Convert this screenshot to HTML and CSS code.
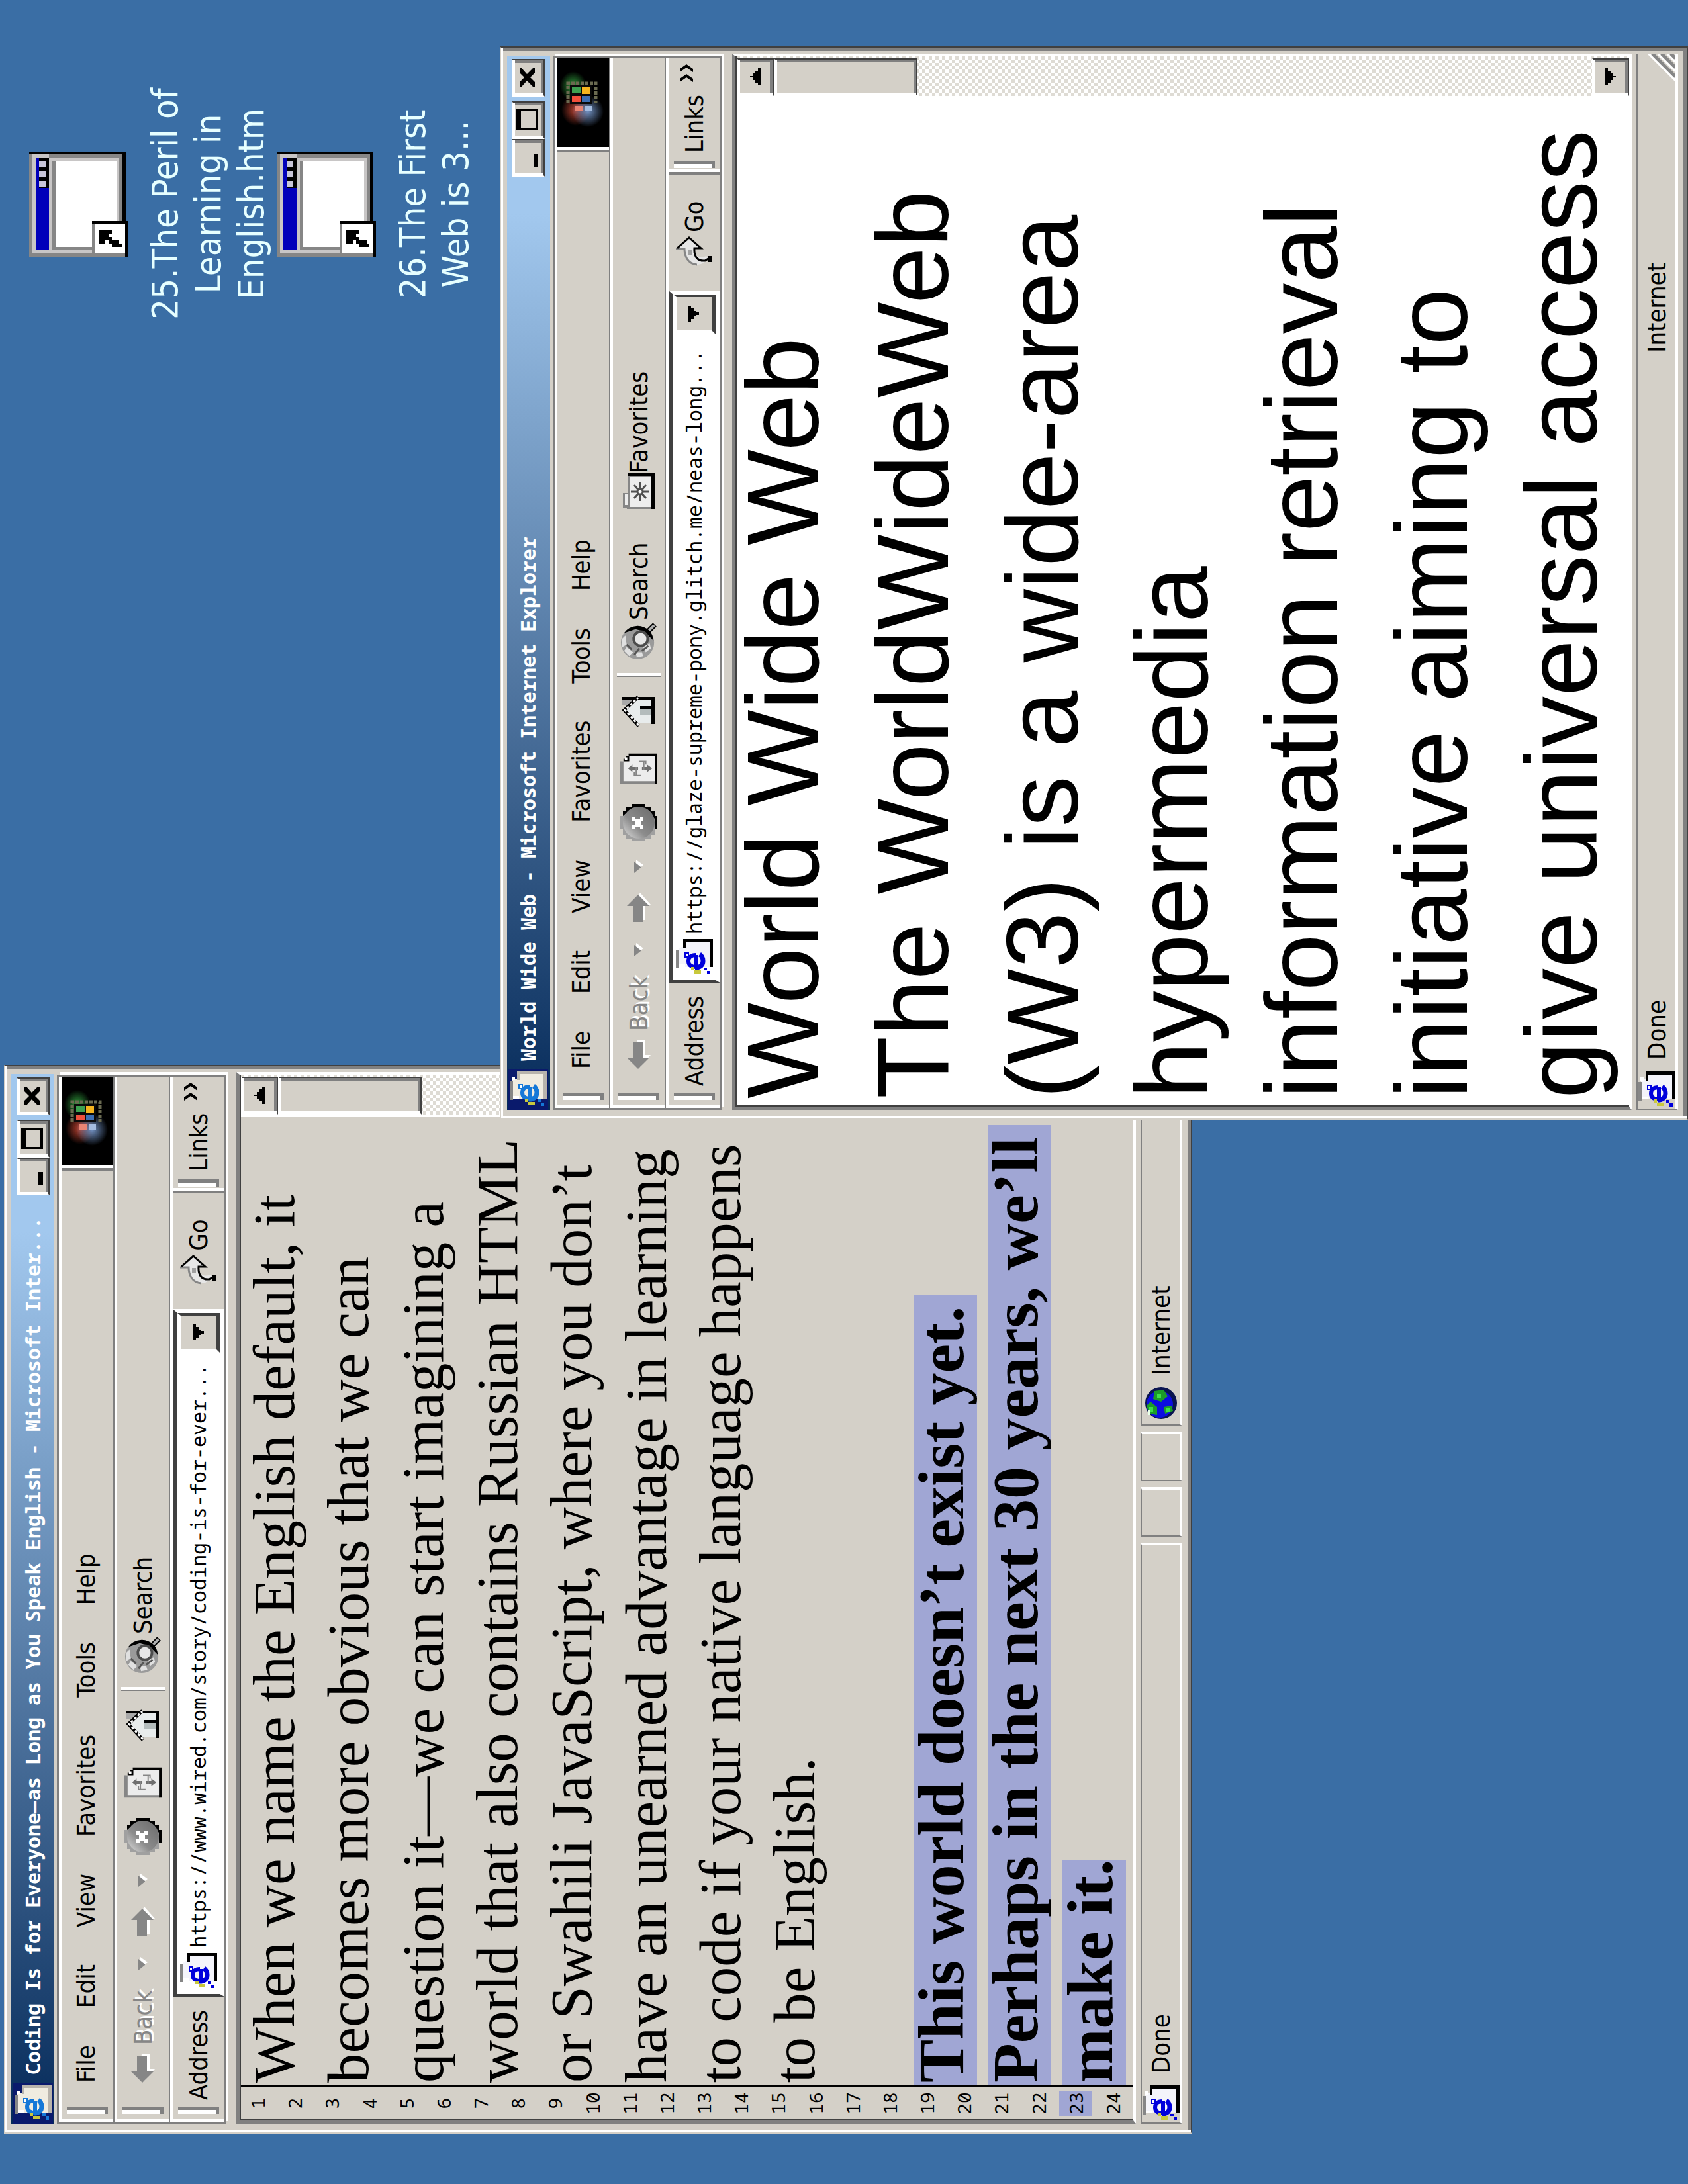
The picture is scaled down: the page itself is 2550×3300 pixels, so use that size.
FILE: index.html
```html
<!DOCTYPE html>
<html lang="en">
<head>
<meta charset="utf-8">
<title>Desktop</title>
<link rel="stylesheet" href="styles.css">
</head>
<body>
<svg class="sprite" aria-hidden="true">
  <defs>
    <radialGradient id="glow-green"><stop offset="0" stop-color="#2f9a3c"/><stop offset="1" stop-color="#2f9a3c" stop-opacity="0"/></radialGradient>
    <radialGradient id="glow-red"><stop offset="0" stop-color="#b8402f"/><stop offset="1" stop-color="#b8402f" stop-opacity="0"/></radialGradient>
    <radialGradient id="glow-blue"><stop offset="0" stop-color="#6f8fc0"/><stop offset="1" stop-color="#6f8fc0" stop-opacity="0"/></radialGradient>
    <linearGradient id="ball" x1="0" y1="0" x2="1" y2="1"><stop offset="0" stop-color="#e0e0e0"/><stop offset=".4" stop-color="#8c8c8c"/><stop offset="1" stop-color="#6a6a6a"/></linearGradient>
  </defs>
  <symbol id="page" viewBox="0 0 56 56">
    <path d="M14 4H44V12H52V52H14Z" fill="var(--sheet)"/>
    <path d="M12 0H40V5H12Z" fill="#868686"/>
    <path d="M42 3H47V8H42ZM14 5H18V14H14Z" fill="#fff"/>
    <path d="M42 11H56V56H14V51H51V15H42Z" fill="var(--edge)"/>
    <path d="M32 31H14C14 22 18 19 23 19C29 19 32 23 32 30" fill="none" stroke="var(--logo)" stroke-width="6"/>
    <path d="M13 29C13 37 17 41 23 41C28 41 31 39 33 36" fill="none" stroke="var(--logo)" stroke-width="7"/>
    <path d="M3 47H9V42H13V47H8V52H3Z" fill="var(--logo)"/>
    <path d="M4 28H9V38H4ZM9 23H14V28H9Z" fill="#c8c83c"/>
    <path d="M29 14H35V19H29Z" fill="#fff" stroke="var(--logo)" stroke-width="2"/>
  </symbol>
  <symbol id="arrow-left" viewBox="0 0 44 36">
    <path d="M3 20L21 36V28H44V16L24 14" fill="#fff"/>
    <path d="M0 17L17 0V9H41V24H17V34Z" fill="#868686"/>
  </symbol>
  <symbol id="arrow-right" viewBox="0 0 44 36">
    <path d="M3 28H26V36L44 20L30 12H3Z" fill="#fff"/>
    <path d="M0 9H24V0L41 17L24 34V24H0Z" fill="#868686"/>
  </symbol>
  <symbol id="caret" viewBox="0 0 20 14">
    <path d="M4 3H20L12 14Z" fill="#fff"/>
    <path d="M0 0H17L9 10H8Z" fill="#868686"/>
  </symbol>
  <symbol id="stop" viewBox="0 0 56 56">
    <path d="M18 0H38V4H46V9H52V18H56V38H52V46H46V52H38V56H18V52H9V46H4V38H0V18H4V9H9V4H18Z" fill="#a0a0a0"/>
    <path d="M38 4H46V9H52V18H56V38H52V46H46V52H38V56H18V52H34L50 36V18Z" fill="#000"/>
    <circle cx="28" cy="28" r="24" fill="url(#ball)"/>
    <path d="M18 18H24V22H31V18H37V23H33V30H37V35H31V31H24V35H18V30H22V23H18Z" fill="#fff"/>
  </symbol>
  <symbol id="refresh" viewBox="0 0 48 58">
    <path d="M2 2H35V12H45V55H2Z" fill="#ececec"/>
    <path d="M0 0H35V5H4V55H0Z" fill="#868686"/>
    <path d="M35 5H39V9H43V13H47V58H0V54H43V14H35Z" fill="#000"/>
    <path d="M37 7H41V11H37Z" fill="#fff"/>
    <path d="M24 12L30 19H26V28H21V19H18ZM21 34H26V42H30L24 50L18 42H21Z" fill="#6e6e6e"/>
    <path d="M18 22H13V33M26 25H14M30 40H35V29M22 37H34" fill="none" stroke="#868686" stroke-width="2"/>
  </symbol>
  <symbol id="home" viewBox="0 0 48 52">
    <path d="M34 0H43V22H34Z" fill="#a8a8a8"/>
    <path d="M6 26L26 6L42 24V46H6Z" fill="#e8ecec"/>
    <path d="M42 0H46V50H5V45H42Z" fill="#000"/>
    <path d="M2 26L26 4L46 25" fill="none" stroke="#000" stroke-width="5"/>
    <path d="M3 26L26 5L45 25" fill="none" stroke="#fff" stroke-width="3" stroke-dasharray="4 3"/>
    <path d="M18 28H28V45H18Z" fill="#b4bcbc"/>
    <path d="M28 28H32V46H28Z" fill="#000"/>
  </symbol>
  <symbol id="search" viewBox="0 0 58 58">
    <circle cx="27" cy="27" r="26" fill="#9a9a9a"/>
    <path d="M42 6A26 26 0 0 1 45 46A26 26 0 0 1 30 52L44 38L48 24Z" fill="#000"/>
    <path d="M6 14L14 6L20 10L12 20ZM4 26L12 24V34L6 36ZM12 40L20 36L26 46L18 48ZM20 3L32 2L38 8L24 10Z" fill="#e0e0e0"/>
    <path d="M16 18L24 10M8 22L18 30M14 34L22 44" stroke="#555" stroke-width="3"/>
    <circle cx="33" cy="32" r="11" fill="#e6e6e6" stroke="#4c4c4c" stroke-width="4"/>
    <path d="M43 42L55 54" stroke="#000" stroke-width="8"/>
    <path d="M46 45L54 53" stroke="#b0b0b0" stroke-width="4"/>
  </symbol>
  <symbol id="favorites" viewBox="0 0 56 48">
    <path d="M4 0H26V8H52V44H2V6H4Z" fill="#868686"/>
    <path d="M8 3H24V8H8ZM5 10H50V42H5Z" fill="#ededed"/>
    <path d="M52 8H56V48H2V43H52Z" fill="#000"/>
    <path d="M28 12V40M14 26H42M18 17L38 35M38 17L18 35" stroke="#505050" stroke-width="3"/>
    <circle cx="28" cy="26" r="4" fill="#fff" stroke="#505050" stroke-width="3"/>
  </symbol>
  <symbol id="go" viewBox="0 0 46 56">
    <path d="M27 0V12C6 12 0 26 4 38L11 50L16 46C12 34 16 28 27 28V40L45 20Z" fill="#e6e6e6"/>
    <path d="M27 0V13C16 13 4 18 3 32" fill="none" stroke="#868686" stroke-width="3"/>
    <path d="M28 2L44 20L28 38V28C14 27 8 34 9 44L14 52" fill="none" stroke="#000" stroke-width="3"/>
    <path d="M7 48H16V55H7Z" fill="#000"/>
    <path d="M18 18H26V24H18Z" fill="#a0a0a0"/>
  </symbol>
  <symbol id="globe" viewBox="0 0 48 48">
    <circle cx="24" cy="24" r="24" fill="#0a1450"/>
    <circle cx="22" cy="22" r="20" fill="#0c0ce0"/>
    <path d="M8 6L20 2L26 8L18 18L6 18ZM30 12L42 14L44 28L34 34L26 24ZM8 30L18 28L20 40L12 42Z" fill="#1c9c28"/>
    <path d="M10 6H18V12H10ZM32 18H38V24H32ZM10 32H16V37H10Z" fill="#3ee048"/>
    <path d="M6 4H14V8H6Z" fill="#e8ffe8"/>
  </symbol>
  <symbol id="flag" viewBox="0 0 134 78">
    <path d="M0 0H134V78H0Z" fill="#000"/>
    <ellipse cx="92" cy="24" rx="22" ry="20" fill="url(#glow-green)"/>
    <ellipse cx="56" cy="28" rx="24" ry="22" fill="url(#glow-red)"/>
    <ellipse cx="54" cy="46" rx="24" ry="24" fill="url(#glow-blue)"/>
    <path d="M66 16H96V58H66" fill="none" stroke="#6a6a50" stroke-width="5" stroke-dasharray="5 2"/>
    <path d="M65 19H93V52H65Z" fill="#0a0a0a"/>
    <path d="M68 22H77V35H68Z" fill="#f0503c"/>
    <path d="M81 22H90V35H81Z" fill="#3ca050"/>
    <path d="M68 37H77V49H68Z" fill="#3c6eb4"/>
    <path d="M80 37H90V49H80Z" fill="#f5b41e"/>
    <path d="M54 26H62V38H54Z" fill="#e88474"/>
    <path d="M54 42H62V52H54Z" fill="#a4bce0"/>
  </symbol>
  <symbol id="window-file" viewBox="0 0 160 150">
    <path d="M0 0H158V146H0Z" fill="#868686"/>
    <path d="M5 5H155V136H5Z" fill="#c8c6c6"/>
    <path d="M10 10H150V30H10Z" fill="#0000ba"/>
    <path d="M104 15H150V30H104Z" fill="#000"/>
    <path d="M106 15H115V25H106ZM121 15H130V25H121ZM136 15H145V25H136Z" fill="#c8c6d8"/>
    <path d="M10 35H145V132H10Z" fill="#868686"/>
    <path d="M15 40H145V132H15Z" fill="#fff"/>
    <path d="M150 30H155V141H50V136H150Z" fill="#868686"/>
    <path d="M155 0H159V146H0V141H155Z" fill="#000"/>
    <path d="M0 95H54V150H0Z" fill="#000"/>
    <path d="M0 95H50V145H0Z" fill="#868686"/>
    <path d="M5 99H50V145H5Z" fill="#fff"/>
    <path d="M20 105H40V125H35V120H30V125H25V136H20V140H15V125H20V120H25V115H20Z" fill="#000"/>
  </symbol>
</svg>

<main class="desktop">
  <nav class="shortcuts" aria-label="Desktop shortcuts">
    <a class="shortcut" href="#peril"><svg class="shortcut-icon"><use href="#window-file"/></svg><span>25.The Peril of<br>Learning in<br>English.htm</span></a>
    <a class="shortcut" href="#first"><svg class="shortcut-icon"><use href="#window-file"/></svg><span>26.The First<br>Web is 3...</span></a>
  </nav>

  <section class="window window-coding">
    <header class="titlebar">
      <svg class="page-icon titled"><use href="#page"/></svg>
      <h1>Coding Is for Everyone—as Long as You Speak English - Microsoft Inter...</h1>
      <div class="controls">
        <button class="bevel control" aria-label="Minimize"><svg viewBox="0 0 56 50"><path d="M14 33H34V40H14Z"/></svg></button>
        <button class="bevel control" aria-label="Maximize"><svg viewBox="0 0 56 50"><path d="M12 7H44V40H12ZM15 14V36H41V14Z" fill-rule="evenodd"/></svg></button>
        <button class="bevel control close" aria-label="Close"><svg viewBox="0 0 56 50"><path d="M14 12H21L28 19L35 12H42V15L33 23L42 32V35H35L28 28L21 35H14V32L23 23L14 15Z"/></svg></button>
      </div>
    </header>
    <div class="rebar">
      <nav class="band menu" aria-label="Menu">
        <i class="grip"></i>
        <div class="menu-items">
          <button>File</button><button>Edit</button><button>View</button><button>Favorites</button><button>Tools</button><button>Help</button>
        </div>
        <svg class="flag"><use href="#flag"/></svg>
      </nav>
      <div class="band tools">
        <i class="grip"></i>
        <button class="tool back" disabled><svg class="arrow"><use href="#arrow-left"/></svg>Back</button>
        <button class="tool drop" aria-label="Back list"><svg class="caret"><use href="#caret"/></svg></button>
        <button class="tool forward" aria-label="Forward"><svg class="arrow"><use href="#arrow-right"/></svg></button>
        <button class="tool drop" aria-label="Forward list"><svg class="caret"><use href="#caret"/></svg></button>
        <button class="tool stop" aria-label="Stop"><svg class="glyph"><use href="#stop"/></svg></button>
        <button class="tool refresh" aria-label="Refresh"><svg class="glyph narrow"><use href="#refresh"/></svg></button>
        <button class="tool home" aria-label="Home"><svg class="glyph narrow"><use href="#home"/></svg></button>
        <i class="divider"></i>
        <button class="tool search"><svg class="glyph"><use href="#search"/></svg>Search</button>
      </div>
      <form class="band address">
        <i class="grip"></i>
        <label for="url-coding">Address</label>
        <div class="combo">
          <svg class="page-icon"><use href="#page"/></svg>
          <input id="url-coding" type="text" value="https://www.wired.com/story/coding-is-for-ever...">
          <button type="button" class="combo-button" aria-label="Show addresses"><svg viewBox="0 0 24 16"><path d="M0 0H24V4H20V8H16V12H14V16H10V12H8V8H4V4H0Z"/></svg></button>
        </div>
        <button type="button" class="go"><svg class="go-icon"><use href="#go"/></svg>Go</button>
        <div class="links"><i class="grip"></i><button type="button">Links</button><svg class="chevrons" viewBox="0 0 28 20"><path d="M0 0H5L12 10L5 20H0L7 10ZM15 0H20L27 10L20 20H15L22 10Z"/></svg></div>
      </form>
    </div>
    <div class="client">
      <ol class="gutter">
        <li>1</li><li>2</li><li>3</li><li>4</li><li>5</li><li>6</li><li>7</li><li>8</li><li>9</li><li>10</li><li>11</li><li>12</li><li>13</li><li>14</li><li>15</li><li>16</li><li>17</li><li>18</li><li>19</li><li>20</li><li>21</li><li>22</li><li class="current">23</li><li>24</li>
      </ol>
      <article class="essay">
        <p>When we name the English default, it</p>
        <p>becomes more obvious that we can</p>
        <p>question it—we can start imagining a</p>
        <p>world that also contains Russian HTML</p>
        <p>or Swahili JavaScript, where you don’t</p>
        <p>have an unearned advantage in learning</p>
        <p>to code if your native language happens</p>
        <p>to be English.</p>
        <p class="blank"></p>
        <p><mark class="spaced">This world doesn’t exist yet.</mark></p>
        <p><mark class="spaced">Perhaps in the next 30 years, we’ll</mark></p>
        <p><mark>make it.</mark></p>
      </article>
      <div class="scrollbar">
        <button class="bevel scroll-button" aria-label="Scroll up"><svg viewBox="0 0 26 16"><path d="M0 16H26V12H22V8H18V4H14V0H12V4H8V8H4V12H0Z"/></svg></button>
        <div class="bevel thumb"></div>
      </div>
    </div>
    <footer class="statusbar">
      <div class="pane pane-main"><svg class="page-icon"><use href="#page"/></svg>Done</div>
      <div class="pane pane-small"></div>
      <div class="pane pane-small"></div>
      <div class="pane pane-zone"><svg class="globe"><use href="#globe"/></svg>Internet</div>
    </footer>
  </section>

  <section class="window window-www">
    <header class="titlebar">
      <svg class="page-icon titled"><use href="#page"/></svg>
      <h1>World Wide Web - Microsoft Internet Explorer</h1>
      <div class="controls">
        <button class="bevel control" aria-label="Minimize"><svg viewBox="0 0 56 50"><path d="M14 33H34V40H14Z"/></svg></button>
        <button class="bevel control" aria-label="Maximize"><svg viewBox="0 0 56 50"><path d="M12 7H44V40H12ZM15 14V36H41V14Z" fill-rule="evenodd"/></svg></button>
        <button class="bevel control close" aria-label="Close"><svg viewBox="0 0 56 50"><path d="M14 12H21L28 19L35 12H42V15L33 23L42 32V35H35L28 28L21 35H14V32L23 23L14 15Z"/></svg></button>
      </div>
    </header>
    <div class="rebar">
      <nav class="band menu" aria-label="Menu">
        <i class="grip"></i>
        <div class="menu-items">
          <button>File</button><button>Edit</button><button>View</button><button>Favorites</button><button>Tools</button><button>Help</button>
        </div>
        <svg class="flag"><use href="#flag"/></svg>
      </nav>
      <div class="band tools">
        <i class="grip"></i>
        <button class="tool back" disabled><svg class="arrow"><use href="#arrow-left"/></svg>Back</button>
        <button class="tool drop" aria-label="Back list"><svg class="caret"><use href="#caret"/></svg></button>
        <button class="tool forward" aria-label="Forward"><svg class="arrow"><use href="#arrow-right"/></svg></button>
        <button class="tool drop" aria-label="Forward list"><svg class="caret"><use href="#caret"/></svg></button>
        <button class="tool stop" aria-label="Stop"><svg class="glyph"><use href="#stop"/></svg></button>
        <button class="tool refresh" aria-label="Refresh"><svg class="glyph narrow"><use href="#refresh"/></svg></button>
        <button class="tool home" aria-label="Home"><svg class="glyph narrow"><use href="#home"/></svg></button>
        <i class="divider"></i>
        <button class="tool search"><svg class="glyph"><use href="#search"/></svg>Search</button>
        <button class="tool favorites"><svg class="glyph"><use href="#favorites"/></svg>Favorites</button>
      </div>
      <form class="band address">
        <i class="grip"></i>
        <label for="url-www">Address</label>
        <div class="combo">
          <svg class="page-icon"><use href="#page"/></svg>
          <input id="url-www" type="text" value="https://glaze-supreme-pony.glitch.me/neas-long...">
          <button type="button" class="combo-button" aria-label="Show addresses"><svg viewBox="0 0 24 16"><path d="M0 0H24V4H20V8H16V12H14V16H10V12H8V8H4V4H0Z"/></svg></button>
        </div>
        <button type="button" class="go"><svg class="go-icon"><use href="#go"/></svg>Go</button>
        <div class="links"><i class="grip"></i><button type="button">Links</button><svg class="chevrons" viewBox="0 0 28 20"><path d="M0 0H5L12 10L5 20H0L7 10ZM15 0H20L27 10L20 20H15L22 10Z"/></svg></div>
      </form>
    </div>
    <div class="client client-white">
      <article class="web">
        <h2>World Wide Web</h2>
        <p>The WorldWideWeb<br>(W3) is a wide-area<br>hypermedia<br>information retrieval<br>initiative aiming to<br>give universal access</p>
      </article>
      <div class="scrollbar">
        <button class="bevel scroll-button" aria-label="Scroll up"><svg viewBox="0 0 26 16"><path d="M0 16H26V12H22V8H18V4H14V0H12V4H8V8H4V12H0Z"/></svg></button>
        <div class="bevel thumb"></div>
        <button class="bevel scroll-button scroll-down" aria-label="Scroll down"><svg viewBox="0 0 26 16"><path d="M0 0H26V4H22V8H18V12H14V16H12V12H8V8H4V4H0Z"/></svg></button>
      </div>
    </div>
    <footer class="statusbar">
      <div class="pane pane-single"><svg class="page-icon"><use href="#page"/></svg><span>Done</span><span class="zone">Internet</span>
        <svg class="resize" viewBox="0 0 42 42"><path d="M2 42L42 2M16 42L42 16M30 42L42 30" stroke="#fff" stroke-width="4"/><path d="M7 42L42 7M21 42L42 21M35 42L42 35" stroke="#868686" stroke-width="5"/></svg>
      </div>
    </footer>
  </section>
</main>
</body>
</html>
```
FILE: styles.css
```css
:root {
  --face: #d4d0c8;
  --shade: #808080;
  --dark: #404040;
  --select: #a0a6d4;
  --ui: "DejaVu Sans Condensed", "Open Sans", sans-serif;
  --mono: "Noto Sans Mono", "DejaVu Sans Mono", monospace;
}

* { box-sizing: border-box; }

html, body {
  margin: 0;
  height: 100%;
  overflow: hidden;
  background: #3a6ea5;
}

.sprite { position: absolute; width: 0; height: 0; }

/* The screen stands on its side: its left edge is the bottom of the page. */
.desktop {
  position: absolute;
  top: 0;
  left: 0;
  display: flex;
  justify-content: flex-end;
  width: 100vh;
  height: 100vw;
  transform: translateY(100vh) rotate(-90deg);
  transform-origin: 0 0;
  font: 38px/46px var(--ui);
  color: #000;
}

button {
  padding: 0;
  border: 0;
  background: none;
  font: inherit;
  color: inherit;
}

svg { display: block; flex: none; }

/* Desktop shortcuts */
.shortcuts {
  display: flex;
  flex-direction: column;
  gap: 6px;
  width: 360px;
  margin-right: 128px;
  padding-top: 44px;
}
.shortcut {
  display: flex;
  flex-direction: column;
  align-items: center;
  gap: 23px;
  font-size: 54px;
  line-height: 65px;
  text-align: center;
  text-decoration: none;
  white-space: nowrap;
  color: #e6ffff;
}
.shortcut-icon { width: 160px; height: 150px; }

/* Window frame */
.window {
  position: absolute;
  display: flex;
  flex-direction: column;
  height: 70.4%;
  padding: 9px 9px 13px 13px;
  border: 2px solid;
  border-color: var(--face) var(--dark) var(--dark) var(--face);
  background: var(--face);
  box-shadow: inset 3px 3px #fff, inset -5px -5px var(--shade);
}
.window-coding { left: 2.3%; top: 6px; width: 48.95%; }
.window-www { left: 48.73%; bottom: 0; width: 49.15%; }

.bevel {
  display: flex;
  align-items: center;
  justify-content: center;
  border: 2px solid;
  border-color: #fff var(--dark) var(--dark) #fff;
  background: var(--face);
  box-shadow: inset 3px 3px #fff, inset -4px -4px var(--shade);
}

.titlebar {
  display: flex;
  align-items: center;
  height: 65px;
  margin-right: 3px;
  padding-right: 5px;
  background: linear-gradient(90deg, #062b5a, #a2c8ee 85%);
}
.titlebar h1 {
  flex: 1;
  margin: 0 0 0 12px;
  overflow: hidden;
  font: bold 30px/40px var(--mono);
  white-space: nowrap;
  color: #fff;
}
.controls { display: flex; }
.control { width: 57px; height: 50px; }
.control svg { width: 56px; height: 50px; }
.close { margin-left: 7px; }

.page-icon {
  width: 56px;
  height: 56px;
  --sheet: #f4f4fa;
  --edge: #000;
  --logo: #0000dc;
}
.titled {
  width: 62px;
  height: 60px;
  padding: 2px;
  background: #0a1a6c;
  --sheet: #f0ece0;
  --edge: #b8b4ac;
  --logo: #1478d8;
}

/* Menu, tool and address bands */
.rebar {
  margin: 4px 4px 0 0;
  border: 3px solid var(--shade);
  border-bottom: 0;
  box-shadow: 4px 4px #fff;
}
.band {
  display: flex;
  align-items: center;
  height: 84px;
  padding: 4px 0 0 12px;
  border-bottom: 2px solid var(--shade);
  box-shadow: inset 4px 4px #fff;
}
.grip {
  flex: none;
  width: 11px;
  height: 62px;
  border: solid var(--shade);
  border-width: 0 5px 5px 0;
  background: #fff;
}
.menu-items {
  display: flex;
  flex: 1;
  gap: 56px;
  margin-left: 36px;
  padding-bottom: 5px;
}
.flag {
  width: 142px;
  height: 78px;
  border-left: 4px solid var(--shade);
  box-shadow: inset 4px 0 #fff;
  padding-left: 4px;
}

.tool { display: flex; align-items: center; }
.tool.back {
  gap: 13px;
  width: 140px;
  margin-left: 36px;
  color: #868686;
  text-shadow: 3px 3px #fff;
}
.arrow { width: 44px; height: 36px; }
.caret { width: 20px; height: 14px; }
.drop { margin-left: 30px; }
.forward { margin-left: 32px; }
.glyph { width: 56px; height: 56px; }
.glyph.narrow { width: 48px; }
.stop { margin-left: 28px; }
.refresh { margin-left: 30px; }
.home { margin-left: 38px; }
.divider {
  width: 6px;
  height: 66px;
  margin-left: 28px;
  border-left: 2px solid var(--shade);
  background: #fff;
}
.search { gap: 4px; width: 206px; margin-left: 20px; }
.favorites { margin-left: 20px; }

.address label { width: 166px; padding-left: 10px; }
.combo {
  display: flex;
  align-items: center;
  flex: 1;
  align-self: stretch;
  min-width: 0;
  padding-left: 6px;
  border: solid;
  border-width: 7px 6px 7px 4px;
  border-color: var(--dark) #fff #fff var(--dark);
  background: #fff;
}
.combo input {
  flex: 1;
  min-width: 0;
  padding: 0 0 0 8px;
  border: 0;
  outline: 0;
  background: none;
  font: 30px/40px var(--mono);
  color: #000;
}
.combo-button {
  display: flex;
  align-items: center;
  justify-content: center;
  align-self: stretch;
  width: 60px;
  border: solid;
  border-width: 5px 4px 6px 6px;
  border-color: #fff var(--dark) var(--dark) #fff;
  background: var(--face);
}
.combo-button svg { width: 24px; height: 16px; }
.go {
  display: flex;
  align-items: center;
  gap: 6px;
  width: 175px;
  padding-left: 36px;
}
.go-icon { width: 46px; height: 56px; }
.links {
  display: flex;
  align-items: center;
  align-self: stretch;
  width: 176px;
  padding-left: 6px;
  border-left: 4px solid var(--shade);
  box-shadow: inset 4px 0 #fff;
}
.links button { margin-left: 12px; }
.chevrons { width: 28px; height: 20px; margin: 0 8px 24px auto; }

/* Document area */
.client {
  display: flex;
  flex: 1;
  min-height: 0;
  margin-top: 16px;
  padding: 2px 0 0 2px;
  border: solid;
  border-width: 5px 4px 4px 5px;
  border-color: var(--shade) #fff #fff var(--shade);
  box-shadow: inset 2px 2px var(--dark);
}
.client-white { background: #fff; }

.gutter {
  display: grid;
  grid-template-rows: repeat(24, 1fr);
  width: 52px;
  margin: 0;
  padding: 0;
  border-right: 4px solid #000;
  list-style: none;
  font: 28px/50px var(--mono);
  text-align: center;
}
.gutter li { height: 50px; }
.gutter .current { margin: 0 5px; background: var(--select); }

.essay {
  display: grid;
  grid-template-rows: repeat(12, 1fr);
  flex: 1;
  min-width: 0;
  font: 89px/100px "Liberation Serif", serif;
  white-space: nowrap;
}
.essay p { height: 100px; margin: 0; padding-left: 3px; }
.essay p:has(mark) { padding: 5px 0 0; }
.essay mark {
  display: block;
  width: fit-content;
  height: 96px;
  padding-left: 3px;
  background: var(--select);
  font-size: 98px;
  line-height: 84px;
  font-weight: bold;
  color: #000;
}
.essay .spaced { padding-right: 18px; }

.web {
  flex: 1;
  min-width: 0;
  margin-top: -28px;
  padding-left: 10px;
  font: 154px/196px "Liberation Sans", sans-serif;
  white-space: nowrap;
}
.web h2, .web p { margin: 0; font: inherit; }

.scrollbar {
  display: flex;
  flex-direction: column;
  width: 64px;
  padding-right: 3px;
  border-left: 4px solid #fff;
  background: repeating-conic-gradient(#dedbd4 0 25%, #fff 0 50%) 0 0 / 10px 10px;
}
.scroll-button { width: 57px; height: 56px; }
.scroll-button svg { width: 26px; height: 16px; }
.scroll-down { margin-top: auto; }
.thumb { height: 217px; }

/* Status bar */
.statusbar {
  display: flex;
  gap: 9px;
  height: 63px;
  margin-top: 7px;
}
.pane {
  display: flex;
  align-items: center;
  gap: 18px;
  border: solid;
  border-width: 2px 4px 4px 2px;
  border-color: var(--shade) #fff #fff var(--shade);
}
.pane-main { gap: 18px; width: 878px; }
.pane-small { width: 75px; }
.pane-zone { flex: 1; padding-left: 8px; }
.globe { width: 48px; height: 48px; }
.pane-single { position: relative; flex: 1; gap: 18px; border-right: 0; }
.zone { margin-left: auto; margin-right: 316px; }
.resize { position: absolute; right: 0; bottom: 0; width: 42px; height: 42px; }
```
